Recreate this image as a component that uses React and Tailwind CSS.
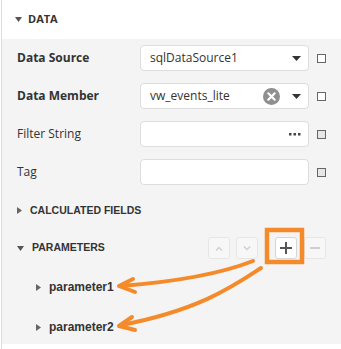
import React from "react";

const label = "font-['Open_Sans','Noto_Sans',sans-serif] text-[12px] text-[#333]";
const arial = "font-['Liberation_Sans',Arial,sans-serif]";

function Caret() {
    return (
        <svg width="9" height="5" viewBox="0 0 9 5"><path d="M0 0h9L4.5 5z" fill="#333" /></svg>
    );
}

function Check({ filled }) {
    return (
        <div className={`w-[9px] h-[9px] border border-[#666] ${filled ? "bg-[#e6e6e6]" : "bg-white"}`} />
    );
}

function Row({ name, bold, children, filled }) {
    return (
        <div className="flex items-center h-[26px]">
            <div className={`w-[138px] pl-[15px] ${label} ${bold ? "font-bold" : ""}`}>{name}</div>
            <div className="w-[169px] h-[26px] bg-white border border-[#ddd] rounded-[4px] flex items-center pl-[9px] pr-[7px]">
                {children}
            </div>
            <div className="ml-[8px]"><Check filled={filled} /></div>
        </div>
    );
}

function Tri({ down }) {
    return down ? (
        <svg width="7" height="5" viewBox="0 0 7 5"><path d="M0 0h7L3.5 5z" fill="#555" /></svg>
    ) : (
        <svg width="5" height="7" viewBox="0 0 5 7"><path d="M0 0v7l5-3.5z" fill="#666" /></svg>
    );
}

function SmallBtn({ children, active }) {
    return (
        <div className={`w-[22px] h-[22px] rounded-[3px] border flex items-center justify-center ${active ? "bg-white border-[#d6d6d6]" : "bg-[#f7f7f7] border-[#e6e6e6]"}`}>
            {children}
        </div>
    );
}

export default function App() {
    return (
        <div className="relative w-[341px] h-[349px] bg-white overflow-hidden">
            <div className="ml-px border-l border-[#dcdcdc] h-full flex flex-col">
                {/* header */}
                <div className="h-[39px] flex items-center pl-[13px] gap-[6px] shrink-0">
                    <Tri down />
                    <span className={`font-['Open_Sans',sans-serif] text-[11px] font-bold text-[#333]`}>DATA</span>
                </div>

                <div className="bg-[#f4f4f4] pt-[6px] h-[305px]">
                    <div className="flex flex-col gap-[12px]">
                        <Row name="Data Source" bold>
                            <span className={label + " text-[12.5px] flex-1"}>sqlDataSource1</span>
                            <Caret />
                        </Row>
                        <Row name="Data Member" bold>
                            <span className={label + " text-[12.5px] flex-1"}>vw_events_lite</span>
                            <svg width="17" height="17" viewBox="0 0 17 17" className="mr-[12px]">
                                <circle cx="8.5" cy="8.5" r="8.5" fill="#8f8f8f" />
                                <path d="M5.3 5.3l6.4 6.4M11.7 5.3l-6.4 6.4" stroke="#fff" strokeWidth="2.2" strokeLinecap="round" />
                            </svg>
                            <Caret />
                        </Row>
                        <Row name="Filter String" filled>
                            <span className="flex-1" />
                            <svg width="12" height="3" viewBox="0 0 12 3">
                                <rect x="0" y="0" width="2.5" height="2.5" fill="#444" />
                                <rect x="4.5" y="0" width="2.5" height="2.5" fill="#444" />
                                <rect x="9" y="0" width="2.5" height="2.5" fill="#444" />
                            </svg>
                        </Row>
                        <Row name="Tag" filled />
                    </div>

                    <div className="mt-[13px] h-[25px] flex items-center pl-[15px] gap-[8px]">
                        <Tri />
                        <span className={`${arial} text-[10.5px] font-bold text-[#333]`}>CALCULATED FIELDS</span>
                    </div>

                    <div className="mt-[12px] h-[26px] flex items-center pl-[15px]">
                        <Tri down />
                        <span className={`${arial} text-[10.5px] font-bold text-[#333] ml-[8px]`}>PARAMETERS</span>
                        <div className="ml-auto mr-[15px] flex items-center">
                            <SmallBtn>
                                <svg width="8" height="5" viewBox="0 0 8 5"><path d="M1 4.5L4 1.5l3 3" stroke="#cfcfcf" strokeWidth="1.3" fill="none" /></svg>
                            </SmallBtn>
                            <div className="ml-[6px]">
                                <SmallBtn>
                                    <svg width="8" height="5" viewBox="0 0 8 5"><path d="M1 0.5L4 3.5l3-3" stroke="#cfcfcf" strokeWidth="1.3" fill="none" /></svg>
                                </SmallBtn>
                            </div>
                            <div className="ml-[17px]">
                                <SmallBtn active>
                                    <svg width="12" height="12" viewBox="0 0 12 12"><path d="M6 0v12M0 6h12" stroke="#555" strokeWidth="2" /></svg>
                                </SmallBtn>
                            </div>
                            <div className="ml-[7px]">
                                <SmallBtn>
                                    <svg width="10" height="2" viewBox="0 0 10 2"><path d="M0 1h10" stroke="#cfcfcf" strokeWidth="2" /></svg>
                                </SmallBtn>
                            </div>
                        </div>
                    </div>

                    <div className="mt-[16px] h-[20px] flex items-center pl-[34px] gap-[8px]">
                        <Tri />
                        <span className={`${arial} text-[12px] font-bold text-[#333]`}>parameter1</span>
                    </div>
                    <div className="mt-[20px] h-[20px] flex items-center pl-[34px] gap-[8px]">
                        <Tri />
                        <span className={`${arial} text-[12px] font-bold text-[#333]`}>parameter2</span>
                    </div>
                </div>
            </div>

            {/* annotation overlay */}
            <svg className="absolute inset-0 pointer-events-none" width="341" height="349" viewBox="0 0 341 349">
                <rect x="267" y="230" width="35" height="32" fill="none" stroke="#f48a2a" strokeWidth="4.5" />
                <g stroke="#f48a2a" strokeWidth="4" fill="none" strokeLinecap="round" strokeLinejoin="round">
                    <path d="M253 261 C225 272 185 281 121 286" />
                    <path d="M133 279 L119 286 L135 292" />
                    <path d="M261 268 C235 285 200 310 121 325" />
                    <path d="M132 317 L119 326 L135 330" />
                </g>
            </svg>
        </div>
    );
}
